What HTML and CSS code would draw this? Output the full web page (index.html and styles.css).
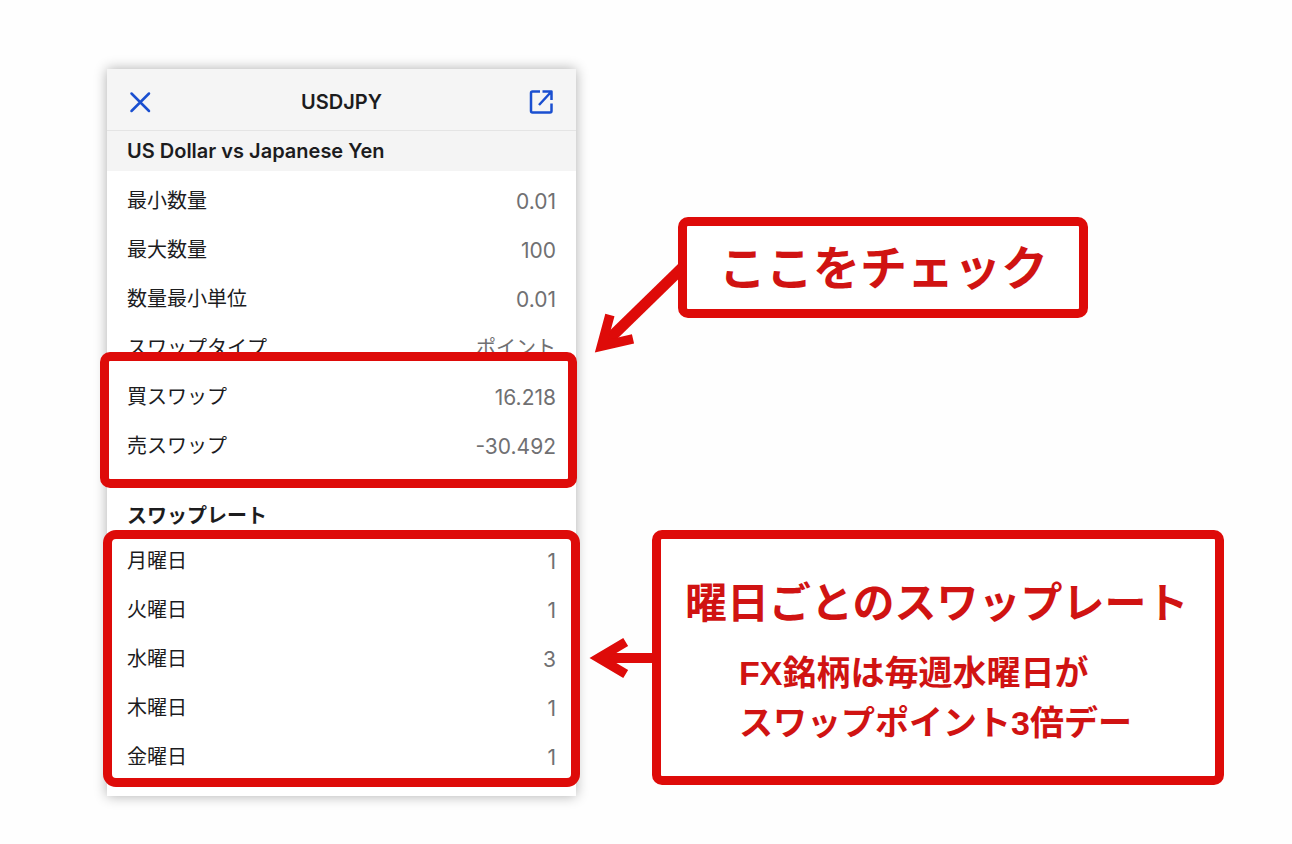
FILE: index.html
```html
<!DOCTYPE html>
<html lang="ja">
<head>
<meta charset="utf-8">
<meta name="viewport" content="width=device-width, initial-scale=1">
<title>USDJPY</title>
<link rel="stylesheet" href="styles.css">
</head>
<body>
<main class="page">
  <section class="card">
    <header class="card-header">
      <button class="icon-button" type="button" aria-label="閉じる">
        <svg width="28" height="28" viewBox="0 0 28 28" fill="none" stroke="currentColor" stroke-width="2.500" stroke-linecap="round"><path d="M4.500 5.500L22 23M22 5.500L4.500 23"/></svg>
      </button>
      <h1 class="card-title">USDJPY</h1>
      <button class="icon-button" type="button" aria-label="外部で開く">
        <svg width="28" height="28" viewBox="1 0 28 28" fill="none" stroke="currentColor" stroke-width="2.500" stroke-linejoin="round"><path d="M13 3.500H5.500a1.500 1.500 0 0 0-1.500 1.500V23a1.500 1.500 0 0 0 1.500 1.500H23a1.500 1.500 0 0 0 1.500-1.500V15.500"/><path d="M15.500 3.500H24.500V12M24 4L12 17"/></svg>
      </button>
    </header>
    <h2 class="symbol-name">US Dollar vs Japanese Yen</h2>
    <dl class="rows">
      <div class="row"><dt>最小数量</dt><dd>0.01</dd></div>
      <div class="row"><dt>最大数量</dt><dd>100</dd></div>
      <div class="row"><dt>数量最小単位</dt><dd>0.01</dd></div>
      <div class="row"><dt>スワップタイプ</dt><dd class="value-text">ポイント</dd></div>
    </dl>
    <div class="marked">
      <dl class="rows-group">
        <div class="row"><dt>買スワップ</dt><dd>16.218</dd></div>
        <div class="row"><dt>売スワップ</dt><dd>-30.492</dd></div>
      </dl>
      <span class="marker marker-swap"></span>
    </div>
    <h2 class="rate-title">スワップレート</h2>
    <div class="marked">
      <dl class="rows-group">
        <div class="row"><dt>月曜日</dt><dd>1</dd></div>
        <div class="row"><dt>火曜日</dt><dd>1</dd></div>
        <div class="row"><dt>水曜日</dt><dd>3</dd></div>
        <div class="row"><dt>木曜日</dt><dd>1</dd></div>
        <div class="row"><dt>金曜日</dt><dd>1</dd></div>
      </dl>
      <span class="marker marker-rate"></span>
    </div>
  </section>

  <div class="notes">
    <aside class="note note-check">
      <p class="note-lead">ここをチェック</p>
      <svg class="arrow arrow-check" width="96" height="96" viewBox="0 0 96 96" fill="none" stroke="currentColor"><path stroke-width="11" d="M94 6L15 83"/><path stroke-width="9.500" d="M19.900 55L11.500 86.100L43 78.800"/></svg>
    </aside>
    <aside class="note note-rate">
      <p class="note-title">曜日ごとのスワップレート</p>
      <p class="note-text">FX銘柄は毎週水曜日が<br>スワップポイント3倍デー</p>
      <svg class="arrow arrow-rate" width="72" height="48" viewBox="0 0 72 48" fill="none" stroke="currentColor"><path stroke-width="10" d="M16 24H72"/><path stroke-width="9.500" d="M39.700 8L12.800 24L39.700 40"/></svg>
    </aside>
  </div>
</main>
</body>
</html>
```
FILE: styles.css
```css
* {
  box-sizing: border-box;
}

body,
h1,
h2,
p,
dl,
dd {
  margin: 0;
}

body {
  background: #fefefe;
  color: #1c1c1e;
  font-family: Inter, "Noto Sans CJK JP", sans-serif;
  font-size: 20px;
  line-height: 29px;
}

.page {
  display: grid;
  grid-template-columns: 469fr 572fr;
  column-gap: 76px;
  align-items: start;
  padding: 69px 68px 48px 107px;
}

.card {
  background: #fff;
  box-shadow: 0 0 12px rgba(0, 0, 0, 0.32);
  padding-bottom: 14px;
}

.card-header {
  display: flex;
  align-items: center;
  justify-content: space-between;
  padding: 17px 20px 13px;
  background: #f5f5f5;
  border-bottom: 1px solid #e4e4e4;
}

.icon-button {
  display: flex;
  padding: 0;
  border: 0;
  background: none;
  color: #1a4fd0;
}

.card-title,
.symbol-name {
  font-size: 20px;
  font-weight: 600;
}

.card-title {
  padding-top: 2px;
}

.symbol-name {
  padding: 6px 20px 5px;
  background: #f4f4f4;
}

.rows {
  padding-top: 6px;
}

.row {
  display: flex;
  justify-content: space-between;
  padding: 10px 20px;
}

.row dd {
  color: #707072;
  font-size: 21px;
}

.row .value-text {
  font-size: 20px;
}

.marked {
  position: relative;
}

.marker {
  position: absolute;
  border: 9px solid #de0b09;
  border-radius: 10px;
  pointer-events: none;
}

.marker-swap {
  inset: -21px -1px -17px -7px;
}

.marker-rate {
  inset: -7px -4px -5px -4px;
  border-radius: 13px;
}

.rate-title {
  padding: 31px 20px 6px;
  font-size: 20px;
  font-weight: 700;
}

.notes {
  display: flex;
  flex-direction: column;
  align-items: flex-start;
  gap: 212px;
  padding-top: 148px;
}

.note {
  position: relative;
  border: 9px solid #de0b09;
  border-radius: 10px;
  background: #fff;
  color: #d01312;
  font-weight: 700;
}

.note-check {
  margin-left: 26px;
  padding: 9px 31px 9px 32px;
}

.note-lead {
  font-size: 47px;
  line-height: 65px;
}

.note-rate {
  align-self: stretch;
  padding: 33px 10px 28px 24px;
}

.note-title {
  font-size: 42px;
  line-height: 62px;
}

.note-text {
  margin-top: 14px;
  padding-left: 54px;
  font-family: "Liberation Sans", "Noto Sans CJK JP", sans-serif;
  font-size: 34px;
  line-height: 50px;
}

.arrow {
  position: absolute;
  color: #de0b09;
}

.arrow-check {
  top: 34px;
  left: -97px;
}

.arrow-rate {
  top: 95px;
  left: -75px;
}
```
